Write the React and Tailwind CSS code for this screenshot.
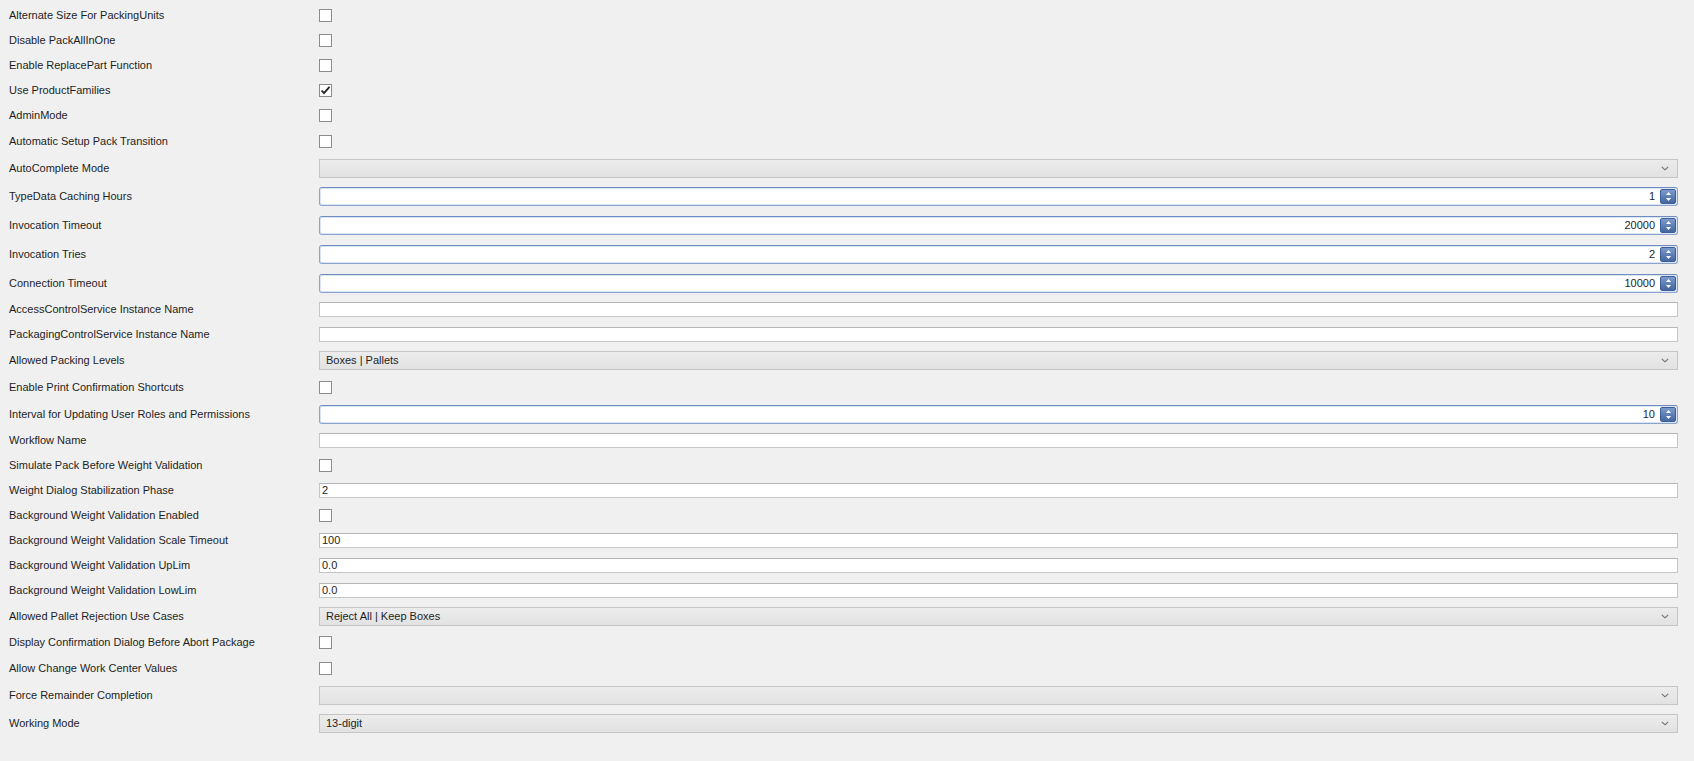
const rows = [
  { label: 'Alternate Size For PackingUnits', type: 'check', h: 'h-[26px]' },
  { label: 'Disable PackAllInOne', type: 'check', h: 'h-[25px]' },
  { label: 'Enable ReplacePart Function', type: 'check', h: 'h-[25px]' },
  { label: 'Use ProductFamilies', type: 'check', checked: true, h: 'h-[25px]' },
  { label: 'AdminMode', type: 'check', h: 'h-[25px]' },
  { label: 'Automatic Setup Pack Transition', type: 'check', h: 'h-[26px]' },
  { label: 'AutoComplete Mode', type: 'combo', value: '', h: 'h-[28px]' },
  { label: 'TypeData Caching Hours', type: 'spin', value: '1', h: 'h-[29px]' },
  { label: 'Invocation Timeout', type: 'spin', value: '20000', h: 'h-[29px]' },
  { label: 'Invocation Tries', type: 'spin', value: '2', h: 'h-[29px]' },
  { label: 'Connection Timeout', type: 'spin', value: '10000', h: 'h-[28px]' },
  { label: 'AccessControlService Instance Name', type: 'text', value: '', h: 'h-[25px]' },
  { label: 'PackagingControlService Instance Name', type: 'text', value: '', h: 'h-[25px]' },
  { label: 'Allowed Packing Levels', type: 'combo', value: 'Boxes | Pallets', h: 'h-[27px]' },
  { label: 'Enable Print Confirmation Shortcuts', type: 'check', h: 'h-[27px]' },
  { label: 'Interval for Updating User Roles and Permissions', type: 'spin', value: '10', h: 'h-[26px]' },
  { label: 'Workflow Name', type: 'text', value: '', h: 'h-[26px]' },
  { label: 'Simulate Pack Before Weight Validation', type: 'check', h: 'h-[25px]' },
  { label: 'Weight Dialog Stabilization Phase', type: 'text', value: '2', h: 'h-[25px]' },
  { label: 'Background Weight Validation Enabled', type: 'check', h: 'h-[25px]' },
  { label: 'Background Weight Validation Scale Timeout', type: 'text', value: '100', h: 'h-[25px]' },
  { label: 'Background Weight Validation UpLim', type: 'text', value: '0.0', h: 'h-[24px]' },
  { label: 'Background Weight Validation LowLim', type: 'text', value: '0.0', h: 'h-[26px]' },
  { label: 'Allowed Pallet Rejection Use Cases', type: 'combo', value: 'Reject All | Keep Boxes', h: 'h-[26px]' },
  { label: 'Display Confirmation Dialog Before Abort Package', type: 'check', h: 'h-[26px]' },
  { label: 'Allow Change Work Center Values', type: 'check', h: 'h-[26px]' },
  { label: 'Force Remainder Completion', type: 'combo', value: '', h: 'h-[28px]' },
  { label: 'Working Mode', type: 'combo', value: '13-digit', h: 'h-[29px]' },
];

function CheckBox({ checked }) {
  return (
    <div className="w-[13px] h-[13px] border border-[#8c8c8c] bg-white flex items-center justify-center">
      {checked && (
        <svg width="11" height="11" viewBox="0 0 11 11">
          <path d="M1.5 5.5 L4 8.2 L9.5 1.8" fill="none" stroke="#222" strokeWidth="1.8" />
        </svg>
      )}
    </div>
  );
}

function TextBox({ value }) {
  return (
    <div className="h-[15px] border border-[#c6c6c6] border-t-[#b5b5b5] bg-white flex items-center pl-[2px] leading-none">
      {value}
    </div>
  );
}

function Combo({ value }) {
  return (
    <div className="h-[19px] border border-[#c5c5c5] bg-gradient-to-b from-[#ececec] to-[#e2e2e2] flex items-center justify-between pl-[6px] pr-[8px]">
      <span>{value}</span>
      <svg width="8" height="5" viewBox="0 0 8 5">
        <path d="M0.8 0.8 L4 3.8 L7.2 0.8" fill="none" stroke="#6d6d6d" strokeWidth="1.1" />
      </svg>
    </div>
  );
}

function Spinner({ value }) {
  return (
    <div className="h-[19px] rounded-[3px] border border-[#8aa3cf] border-t-[#6f8cc0] bg-white shadow-[inset_0_0_0_1px_#dbe4f3] flex items-center justify-end pr-[1px]">
      <span className="pr-[5px]">{value}</span>
      <div className="w-[16px] h-[15px] rounded-[2px] border border-[#3d5f98] bg-gradient-to-b from-[#7c9bcf] to-[#44679f] flex flex-col items-center justify-center gap-[3px]">
        <svg width="5" height="3" viewBox="0 0 5 3">
          <path d="M0 3 L2.5 0 L5 3 Z" fill="#fff" />
        </svg>
        <svg width="5" height="3" viewBox="0 0 5 3">
          <path d="M0 0 L5 0 L2.5 3 Z" fill="#fff" />
        </svg>
      </div>
    </div>
  );
}

export default function App() {
  return (
    <div className="w-[1694px] h-[761px] bg-[#f0f0f0] pt-[2px] text-[11px] text-[#1e1e1e] overflow-hidden" style={{ fontFamily: '"Liberation Sans", Arial, sans-serif' }}>
      {rows.map((r) => (
        <div key={r.label} className={`flex items-center ${r.h}`}>
          <div className="w-[319px] shrink-0 pl-[9px] whitespace-nowrap">{r.label}</div>
          <div className="flex-1 pr-[16px]">
            {r.type === 'check' && <CheckBox checked={r.checked} />}
            {r.type === 'text' && <TextBox value={r.value} />}
            {r.type === 'combo' && <Combo value={r.value} />}
            {r.type === 'spin' && <Spinner value={r.value} />}
          </div>
        </div>
      ))}
    </div>
  );
}
